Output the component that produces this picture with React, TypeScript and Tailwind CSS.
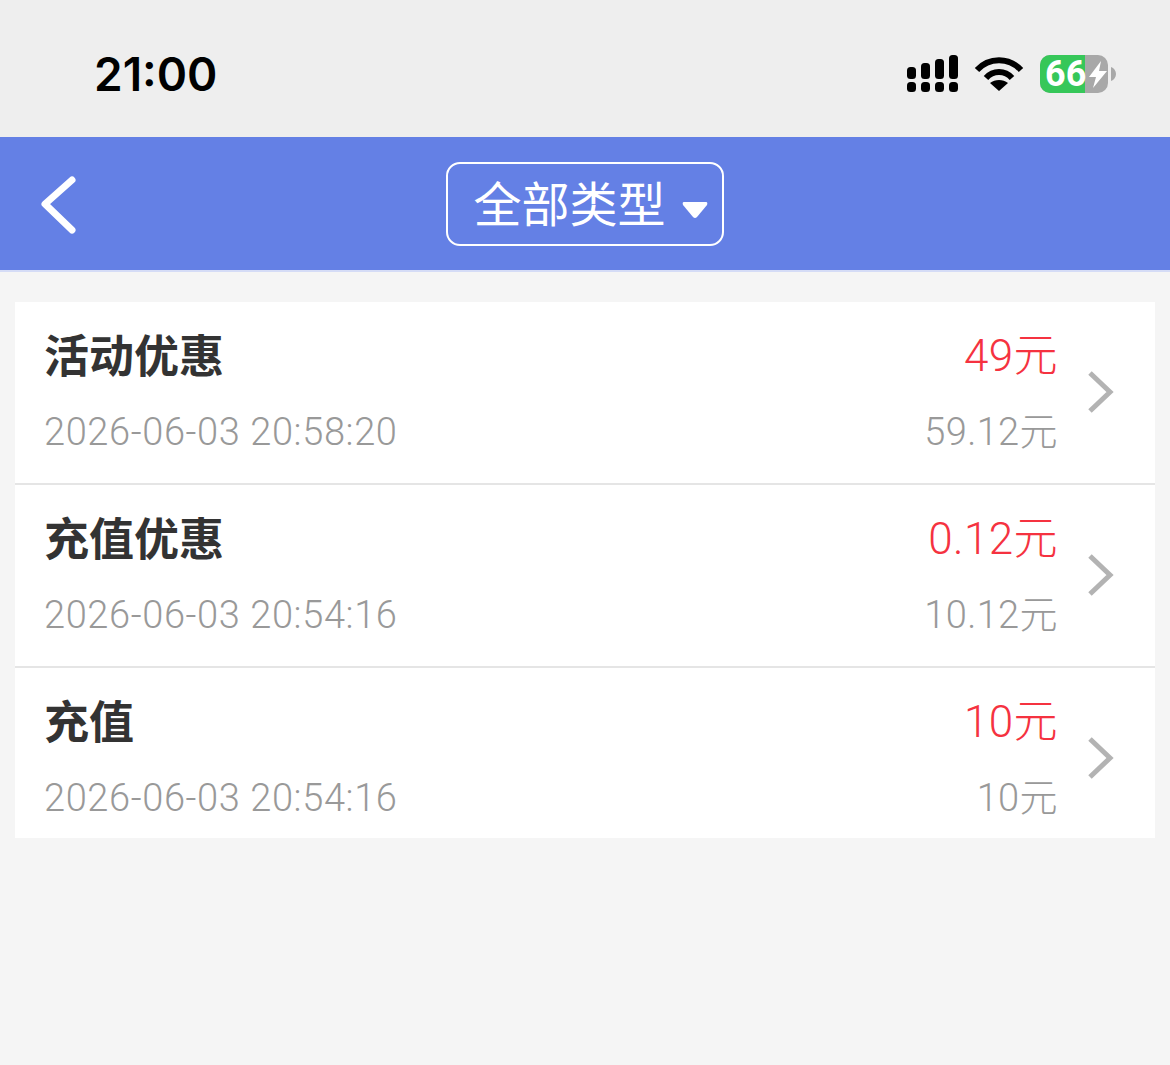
import React from "react";

const rows = [
  { t: "活动优惠", d: "2026-06-03 20:58:20", a: "49元", b: "59.12元" },
  { t: "充值优惠", d: "2026-06-03 20:54:16", a: "0.12元", b: "10.12元" },
  { t: "充值", d: "2026-06-03 20:54:16", a: "10元", b: "10元" },
];

function Signal() {
  return (
    <svg width="52" height="38" viewBox="0 0 52 38" fill="#000">
      <rect x="1" y="12" width="9" height="12" rx="3.5" />
      <rect x="15" y="8" width="9" height="16" rx="3.5" />
      <rect x="29" y="4" width="9" height="20" rx="3.5" />
      <rect x="43" y="0" width="9" height="24" rx="3.5" />
      <rect x="1" y="27" width="9" height="10" rx="3.5" />
      <rect x="15" y="27" width="9" height="10" rx="3.5" />
      <rect x="29" y="27" width="9" height="10" rx="3.5" />
      <rect x="43" y="27" width="9" height="10" rx="3.5" />
    </svg>
  );
}

function Wifi() {
  return (
    <svg width="50" height="36" viewBox="0 0 50 36" fill="none" stroke="#000" strokeWidth="6">
      <path d="M3 14 C15 1 35 1 47 14" />
      <path d="M12 22 C19 14 31 14 38 22" />
      <path d="M25 35 L16 27 C21 23 29 23 34 27 Z" fill="#000" stroke="none" />
    </svg>
  );
}

function Battery() {
  return (
    <div className="flex items-center">
      <div className="relative h-[38px] w-[68px]">
        <div className="flex h-full w-full overflow-hidden rounded-[10px] bg-[#a8a8a8]">
          <div className="h-full w-[45px] bg-[#36c759]" />
        </div>
        <span className="absolute left-[5px] top-0 text-[36px] leading-[38px] font-bold text-white font-['Roboto','Liberation_Sans',sans-serif]">
          66
        </span>
        <svg className="absolute left-[48px] top-[6px]" width="20" height="27" viewBox="0 0 20 27" fill="#fff">
          <path d="M13 0 L1 16 H8 L5 27 L19 10 H11 Z" />
        </svg>
      </div>
      <svg className="ml-[3px]" width="5" height="14" viewBox="0 0 5 14" fill="#a8a8a8">
        <path d="M0 0 C3 1 5 4 5 7 C5 10 3 13 0 14 Z" />
      </svg>
    </div>
  );
}

export default function App() {
  return (
    <div className="flex h-[1065px] w-[1170px] flex-col overflow-hidden bg-[#f5f5f5] font-['Noto_Sans_CJK_SC','Noto_Sans',sans-serif]">
      <div className="flex h-[137px] shrink-0 items-center justify-between bg-[#eeeeee] pl-[94px] pr-[54px] pt-[11px]">
        <span className="text-[46px] leading-none font-semibold text-black font-['Inter','Liberation_Sans',sans-serif]">
          21:00
        </span>
        <div className="flex items-center">
          <Signal />
          <div className="mx-[16px]"><Wifi /></div>
          <Battery />
        </div>
      </div>

      <div className="relative flex h-[135px] shrink-0 items-center justify-center border-b-2 border-[#d5dcf6] bg-[#6480e5]">
        <svg className="absolute left-[38px] top-[36px]" width="42" height="62" viewBox="0 0 42 62" fill="none" stroke="#fff" strokeWidth="7" strokeLinecap="round" strokeLinejoin="round">
          <path d="M34 7 L7 31 L34 57" />
        </svg>
        <div className="ml-[-1px] flex h-[84px] w-[278px] items-center rounded-[14px] border-2 border-white pl-[26px]">
          <span className="mt-[-6px] text-[48px] leading-none font-normal text-white">全部类型</span>
          <svg className="ml-[16px] mt-[12px]" width="26" height="16" viewBox="0 0 26 16" fill="#fff">
            <path d="M2 0 H24 Q26 0 25 3 L15 15 Q13 17 11 15 L1 3 Q0 0 2 0 Z" />
          </svg>
        </div>
      </div>

      <div className="mx-[15px] mt-[30px] flex flex-col bg-white">
        {rows.map((r, i) => (
          <div key={i} className={`flex items-start ${i < 2 ? "h-[183px] border-b-2 border-[#e5e5e5]" : "h-[170px]"}`}>
            <div className="flex flex-1 flex-col pl-[29px] pt-[24px]">
              <span className="text-[45px] leading-[56px] font-bold text-[#333333]">{r.t}</span>
              <span className="mt-[25px] text-[38px] leading-[50px] tracking-[0.6px] font-light text-[#999999] font-['Roboto','Noto_Sans_CJK_SC',sans-serif]">{r.d}</span>
            </div>
            <div className="flex flex-col items-end pt-[26px]">
              <span className="text-[44px] leading-[56px] tracking-[0.4px] font-light text-[#f53240] font-['Roboto','Noto_Sans_CJK_SC',sans-serif]">{r.a}</span>
              <span className="mt-[23px] text-[38px] leading-[50px] tracking-[0.4px] font-light text-[#999999] font-['Roboto','Noto_Sans_CJK_SC',sans-serif]">{r.b}</span>
            </div>
            <svg className="ml-[29px] mr-[40px] mt-[68px]" width="28" height="44" viewBox="0 0 28 44" fill="none" stroke="#b3b3b3" strokeWidth="5">
              <path d="M3 3 L23 22 L3 41" />
            </svg>
          </div>
        ))}
      </div>
    </div>
  );
}
